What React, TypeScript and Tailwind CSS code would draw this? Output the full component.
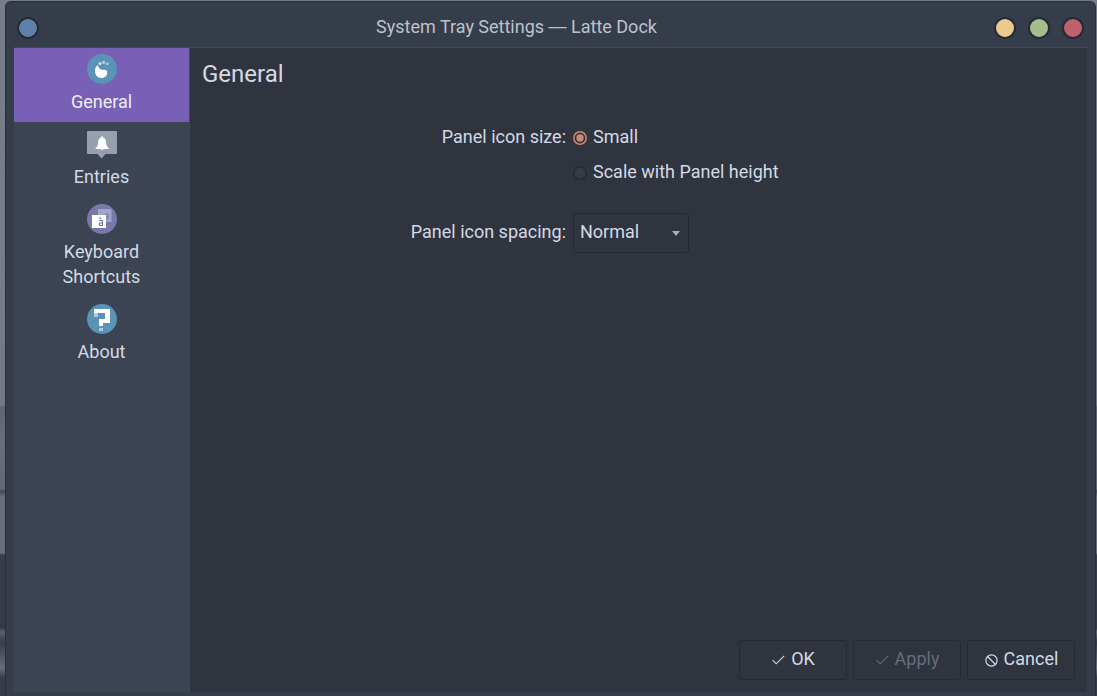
import type { ReactNode } from "react";

function FootIcon() {
  return (
    <svg width="30" height="30" viewBox="0 0 30 30" className="block">
      <circle cx="15" cy="15" r="15" fill="#5a93b5" />
      <path d="M10.3 11.2C8.4 13 7.8 15.4 8 17.8C8.3 21.6 11 24 14.3 24C18 24 20.4 21.6 20.2 18.2C20.1 16.7 19.2 15.8 17.4 15.8C14.8 16 12.3 15.2 11.4 12.7C11.1 11.8 10.8 10.9 10.3 11.2Z" fill="#fff" />
      <circle cx="13" cy="9.7" r="1.4" fill="#e9f1f6" />
      <circle cx="16.6" cy="8.4" r="1.6" fill="#b3cedd" />
      <circle cx="20.3" cy="9.7" r="1.5" fill="#a5c4d6" />
    </svg>
  );
}

function BellIcon() {
  return (
    <svg width="30" height="30" viewBox="0 0 30 30" className="block">
      <path d="M1 2H29Q30 2 30 3V24Q30 25 29 25H18.5L14.5 29.5L10.5 25H1Q0 25 0 24V3Q0 2 1 2Z" fill="#959fae" />
      <path d="M15 7.2C15.7 7.2 16 7.8 16 8.5C18.2 9.2 19 11 19.1 13.2C19.3 16 19.8 17.6 21.6 19V20H8.6V19C10.4 17.6 10.9 16 11.1 13.2C11.2 11 12 9.2 14 8.5C14 7.8 14.3 7.2 15 7.2Z" fill="#fff" />
      <path d="M13.3 20H16.7L15 21.2Z" fill="#fff" />
    </svg>
  );
}

function KeyboardIcon() {
  return (
    <svg width="30" height="30" viewBox="0 0 30 30" className="block">
      <circle cx="15" cy="15" r="15" fill="#7879aa" />
      <rect x="11" y="5" width="13.5" height="13" fill="#a3a4c9" />
      <path d="M18 10H21V15H19M18 12.5H21" fill="none" stroke="#7879aa" strokeWidth="1" />
      <rect x="5" y="11" width="14" height="13" fill="#fff" />
      <path d="M12 16.5H15.5V21.5H12.5V19H15.5M12.5 13.5L14 15" fill="none" stroke="#7476a7" strokeWidth="1.1" />
    </svg>
  );
}

function QuestionIcon() {
  return (
    <svg width="30" height="30" viewBox="0 0 30 30" className="block">
      <circle cx="15" cy="15" r="15" fill="#5a93b5" />
      <path d="M7 5H23V19H16V22H12V15H18V9H7Z" fill="#fff" />
      <path d="M7 9H11V13H7ZM12 24H16V27H12Z" fill="#afcddd" />
    </svg>
  );
}

function CheckIcon() {
  return (
    <svg width="13" height="12" viewBox="0 0 13 12" className="block">
      <path d="M0.7 6.2L4.2 9.8L12.2 1.8" fill="none" stroke="currentColor" strokeWidth="1.15" />
    </svg>
  );
}

function CancelIcon() {
  return (
    <svg width="13" height="13" viewBox="0 0 13 13" className="block">
      <circle cx="6.5" cy="6.5" r="5.6" fill="none" stroke="currentColor" strokeWidth="1.2" />
      <path d="M2.5 2.5L10.5 10.5" stroke="currentColor" strokeWidth="1.2" />
    </svg>
  );
}

function NavItem({ icon, label, active = false }: { icon: ReactNode; label: ReactNode; active?: boolean }) {
  return (
    <button
      className={`flex w-full flex-col items-center justify-start pt-1.5 leading-[25px] ${
        active ? "mb-px h-[74px] bg-[#7860b7] text-[#eceff4]" : "pb-[9px]"
      }`}
    >
      {icon}
      <span className="mt-[5px]">{label}</span>
    </button>
  );
}

function DialogButton({ icon, children, disabled = false }: { icon: ReactNode; children: ReactNode; disabled?: boolean }) {
  return (
    <button
      disabled={disabled}
      className={`flex h-10 w-[108px] items-center justify-center gap-1.5 rounded-[3px] border pl-px ${
        disabled ? "border-[#272c37] text-[#666d7b]" : "border-[#242933] text-[#d3dae6]"
      }`}
    >
      <span>{icon}</span>
      <span className="-mt-[3px]">{children}</span>
    </button>
  );
}

function WindowDot({ color }: { color: string }) {
  return <button className={`size-[22px] rounded-full border-2 border-[#252b36] ${color}`} />;
}

export default function App() {
  return (
    <div className="flex h-[696px] w-[1097px] overflow-hidden bg-[linear-gradient(180deg,#777d89_0,#747a86_405px,#5e6471_407px,#686e7a_440px,#626874_489px,#454b58_491px,#686e7a_497px,#686e7a_553px,#373d49_555px,#343a46_628px,#5b616d_632px,#353b47_642px,#686e79_668px,#353b47_678px)] pt-px pr-px pl-[5px] font-[Roboto,sans-serif] text-[18px] text-[#d3dae6]">
      <div className="flex min-w-0 flex-1 flex-col rounded-t-md border-x border-t border-[#292f3b] bg-[#363d4a]">
        <header className="mx-2 grid h-[46px] shrink-0 grid-cols-[1fr_auto_1fr] items-center border-b border-[#434a57] pt-[7px]">
          <div className="flex pl-[3px]"><WindowDot color="bg-[#5e81ac]" /></div>
          <h1 className="-mt-[3px] pr-[68px] leading-[27px] text-[#bdc2cb]">
            System Tray Settings <span className="relative -top-px font-['Liberation_Sans',sans-serif] leading-none">—</span> Latte Dock
          </h1>
          <div className="flex justify-end gap-3 pr-[3px]">
            <WindowDot color="bg-[#ebcb8b]" />
            <WindowDot color="bg-[#a3be8c]" />
            <WindowDot color="bg-[#bf616a]" />
          </div>
        </header>
        <div className="mx-2 mb-1 flex min-h-0 flex-1">
          <nav className="w-[176px] shrink-0 border-r border-[#414754] bg-[#3c4352]">
            <NavItem active icon={<FootIcon />} label="General" />
            <NavItem icon={<BellIcon />} label="Entries" />
            <NavItem icon={<KeyboardIcon />} label={<>Keyboard<br />Shortcuts</>} />
            <NavItem icon={<QuestionIcon />} label="About" />
          </nav>
          <main className="flex min-w-0 flex-1 flex-col bg-[#2f343f] px-3 pb-3">
            <h2 className="mt-[10px] text-[24px] leading-[33px]">General</h2>
            <div className="mt-[28px] grid grid-cols-[364px_1fr] gap-x-[7px] leading-[36px]">
              <span className="text-right">Panel icon size:</span>
              <label className="flex items-center gap-1.5">
                <svg width="14" height="14" viewBox="0 0 14 14" className="mt-px">
                  <circle cx="7" cy="7" r="6.2" fill="#303541" stroke="#d08770" strokeWidth="1.5" />
                  <circle cx="7" cy="7" r="3.7" fill="#d08770" />
                </svg>
                Small
              </label>
              <span />
              <label className="-mt-px flex items-center gap-1.5">
                <svg width="14" height="14" viewBox="0 0 14 14" className="mt-px">
                  <circle cx="7" cy="7" r="6.2" fill="#353a43" stroke="#252a34" strokeWidth="1.4" />
                </svg>
                Scale with Panel height
              </label>
              <span className="mt-6 text-right">Panel icon spacing:</span>
              <button className="mt-[23px] flex h-10 w-[116px] items-center justify-between rounded-[3px] border border-[#242933] pr-2 pl-1.5">
                <span className="-mt-[3px]">Normal</span>
                <svg width="8" height="5" viewBox="0 0 8 5" className="mt-px"><path d="M0 0H8L4 5Z" fill="#a8adb7" /></svg>
              </button>
            </div>
            <footer className="mt-auto flex justify-end gap-1.5">
              <DialogButton icon={<CheckIcon />}>OK</DialogButton>
              <DialogButton disabled icon={<CheckIcon />}>Apply</DialogButton>
              <DialogButton icon={<CancelIcon />}>Cancel</DialogButton>
            </footer>
          </main>
        </div>
      </div>
    </div>
  );
}
